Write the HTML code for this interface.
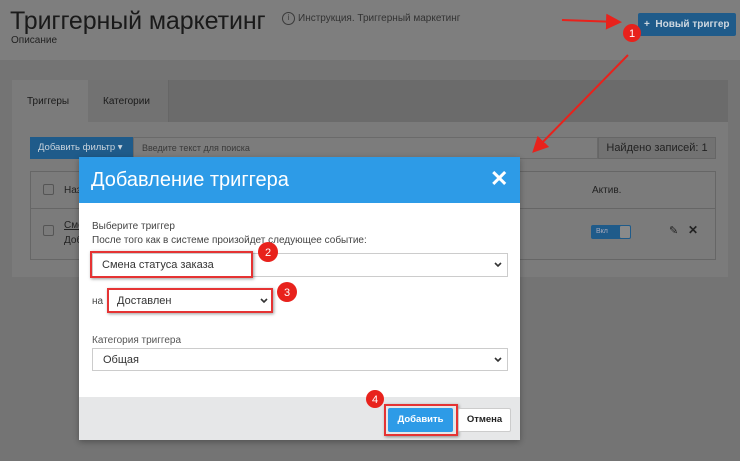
<!DOCTYPE html>
<html><head><meta charset="utf-8"><style>
*{box-sizing:border-box;margin:0;padding:0}
body{width:740px;height:461px;overflow:hidden;background:#747474;font-family:"Liberation Sans",sans-serif;position:relative;color:#222}
.abs{position:absolute}
.hdr{left:0;top:0;width:740px;height:60px;background:#7e7e7e}
.chev{position:absolute;right:5px;top:50%;margin-top:-3px}
</style></head><body>
<div class="abs hdr"></div>
<div class="abs" style="left:10px;top:7px;font-size:25px;color:#1a1a1a;letter-spacing:-0.1px">Триггерный маркетинг</div>
<div class="abs" style="left:282px;top:12px;width:13px;height:13px;border:1.5px solid #3a3a3a;border-radius:50%;font-size:8px;line-height:10px;text-align:center;color:#3a3a3a">i</div>
<div class="abs" style="left:298px;top:13px;font-size:10px;color:#333">Инструкция. Триггерный маркетинг</div>
<div class="abs" style="left:11px;top:35px;font-size:10px;color:#222">Описание</div>
<div class="abs" style="left:638px;top:13px;width:98px;height:23px;background:#1f5b8a;border-radius:2px;color:#cfd8e0;font-size:10px;font-weight:bold;line-height:23px;padding-left:6px">+ &nbsp;Новый триггер</div>
<!-- panel -->
<div class="abs" style="left:12px;top:80px;width:716px;height:197px;background:#7b7b7b"></div>
<div class="abs" style="left:88px;top:80px;width:640px;height:42px;background:#6b6b6b"></div>
<div class="abs" style="left:88px;top:80px;width:81px;height:42px;background:#727272;border-right:1px solid #666"></div>
<div class="abs" style="left:27px;top:96px;font-size:10px;color:#1a1a1a">Триггеры</div>
<div class="abs" style="left:103px;top:96px;font-size:10px;color:#1a1a1a">Категории</div>
<div class="abs" style="left:30px;top:137px;width:103px;height:22px;background:#1f5b8a;color:#c9d3dc;font-size:9.5px;line-height:22px;padding-left:8px">Добавить фильтр ▾</div>
<div class="abs" style="left:133px;top:137px;width:465px;height:22px;background:#7c7c7c;border:1px solid #6a6a6a;font-size:9px;color:#3a3a3a;line-height:20px;padding-left:8px">Введите текст для поиска</div>
<div class="abs" style="left:598px;top:137px;width:118px;height:22px;background:#727272;border:1px solid #666;font-size:11px;color:#222;line-height:20px;text-align:center">Найдено записей: 1</div>
<div class="abs" style="left:30px;top:171px;width:686px;height:89px;border:1px solid #666"></div>
<div class="abs" style="left:30px;top:208px;width:686px;height:1px;background:#666"></div>
<div class="abs" style="left:43px;top:184px;width:11px;height:11px;border:1px solid #555;border-radius:2px"></div>
<div class="abs" style="left:43px;top:225px;width:11px;height:11px;border:1px solid #555;border-radius:2px"></div>
<div class="abs" style="left:64px;top:185px;font-size:10px;color:#222">Наз</div>
<div class="abs" style="left:64px;top:220px;font-size:10px;color:#222;text-decoration:underline">Сме</div>
<div class="abs" style="left:64px;top:235px;font-size:10px;color:#222">Доб</div>
<div class="abs" style="left:592px;top:185px;font-size:10px;color:#222">Актив.</div>
<div class="abs" style="left:591px;top:225px;width:40px;height:14px;background:#1f5b8a;border-radius:2px;font-size:7px;color:#aab;line-height:14px;padding-left:5px">Вкл</div>
<div class="abs" style="left:620px;top:226px;width:10px;height:12px;background:#8a8a8a;border-radius:1px"></div>
<div class="abs" style="left:669px;top:224px;font-size:11px;color:#222">✎</div>
<div class="abs" style="left:688px;top:223px;font-size:12px;color:#222;font-weight:bold">✕</div>
<!-- modal -->
<div class="abs" style="left:79px;top:157px;width:441px;height:283px;background:#fff;box-shadow:0 2px 6px rgba(0,0,0,.3)"></div>
<div class="abs" style="left:79px;top:157px;width:441px;height:46px;background:#2d9be7"></div>
<div class="abs" style="left:91px;top:169px;font-size:20px;color:#fff">Добавление триггера</div>
<div class="abs" style="left:490px;top:166px;font-size:22px;color:#fff;font-weight:bold">✕</div>
<div class="abs" style="left:92px;top:221px;font-size:10px;color:#444">Выберите триггер</div>
<div class="abs" style="left:92px;top:235px;font-size:10px;color:#444">После того как в системе произойдет следующее событие:</div>
<div class="abs" style="left:92px;top:253px;width:416px;height:24px;border:1px solid #ccc;font-size:11px;color:#333;line-height:23px;padding-left:9px">Смена статуса заказа<svg class="chev" width="8" height="6"><path d="M1 1 L4 4 L7 1" stroke="#333" stroke-width="1.6" fill="none"/></svg></div>
<div class="abs" style="left:90px;top:251px;width:163px;height:27px;border:2px solid #e53333;box-shadow:1px 1px 3px rgba(0,0,0,.4)"></div>
<div class="abs" style="left:92px;top:296px;font-size:10px;color:#444">на</div>
<div class="abs" style="left:107px;top:288px;width:166px;height:25px;border:2px solid #e53333;box-shadow:1px 1px 3px rgba(0,0,0,.4);font-size:11px;color:#333;line-height:22px;padding-left:8px">Доставлен<svg class="chev" style="right:3px" width="8" height="6"><path d="M1 1 L4 4 L7 1" stroke="#333" stroke-width="1.6" fill="none"/></svg></div>
<div class="abs" style="left:92px;top:335px;font-size:10px;color:#555">Категория триггера</div>
<div class="abs" style="left:92px;top:348px;width:416px;height:23px;border:1px solid #ccc;font-size:11px;color:#333;line-height:22px;padding-left:10px">Общая<svg class="chev" width="8" height="6"><path d="M1 1 L4 4 L7 1" stroke="#333" stroke-width="1.6" fill="none"/></svg></div>
<div class="abs" style="left:79px;top:397px;width:441px;height:43px;background:#e6e7e8"></div>
<div class="abs" style="left:384px;top:404px;width:74px;height:32px;border:2px solid #e53333;box-shadow:1px 1px 3px rgba(0,0,0,.4)"></div>
<div class="abs" style="left:388px;top:408px;width:65px;height:24px;background:#2d9be7;border-radius:2px;color:#fff;font-size:9.5px;font-weight:bold;text-align:center;line-height:24px">Добавить</div>
<div class="abs" style="left:458px;top:408px;width:53px;height:24px;background:#fff;border:1px solid #ccc;border-radius:2px;color:#222;font-size:9.5px;font-weight:bold;text-align:center;line-height:22px">Отмена</div>
<!-- arrows -->
<svg class="abs" style="left:0;top:0" width="740" height="461">
<defs><marker id="a" markerWidth="8" markerHeight="8" refX="6" refY="4" orient="auto"><path d="M0,0 L8,4 L0,8 z" fill="#e8221c"/></marker></defs>
<line x1="562" y1="20" x2="618" y2="22" stroke="#e8221c" stroke-width="2" marker-end="url(#a)"/>
<line x1="628" y1="55" x2="535" y2="150" stroke="#e8221c" stroke-width="2" marker-end="url(#a)"/>
<g font-family="Liberation Sans" font-size="11" fill="#fff" text-anchor="middle">
<circle cx="632" cy="33" r="9" fill="#e8221c"/><text x="632" y="37">1</text>
<circle cx="268" cy="252" r="10" fill="#e8221c"/><text x="268" y="256">2</text>
<circle cx="287" cy="292" r="10" fill="#e8221c"/><text x="287" y="296">3</text>
<circle cx="375" cy="399" r="9" fill="#e8221c"/><text x="375" y="403">4</text>
</g>
</svg>
</body></html>
